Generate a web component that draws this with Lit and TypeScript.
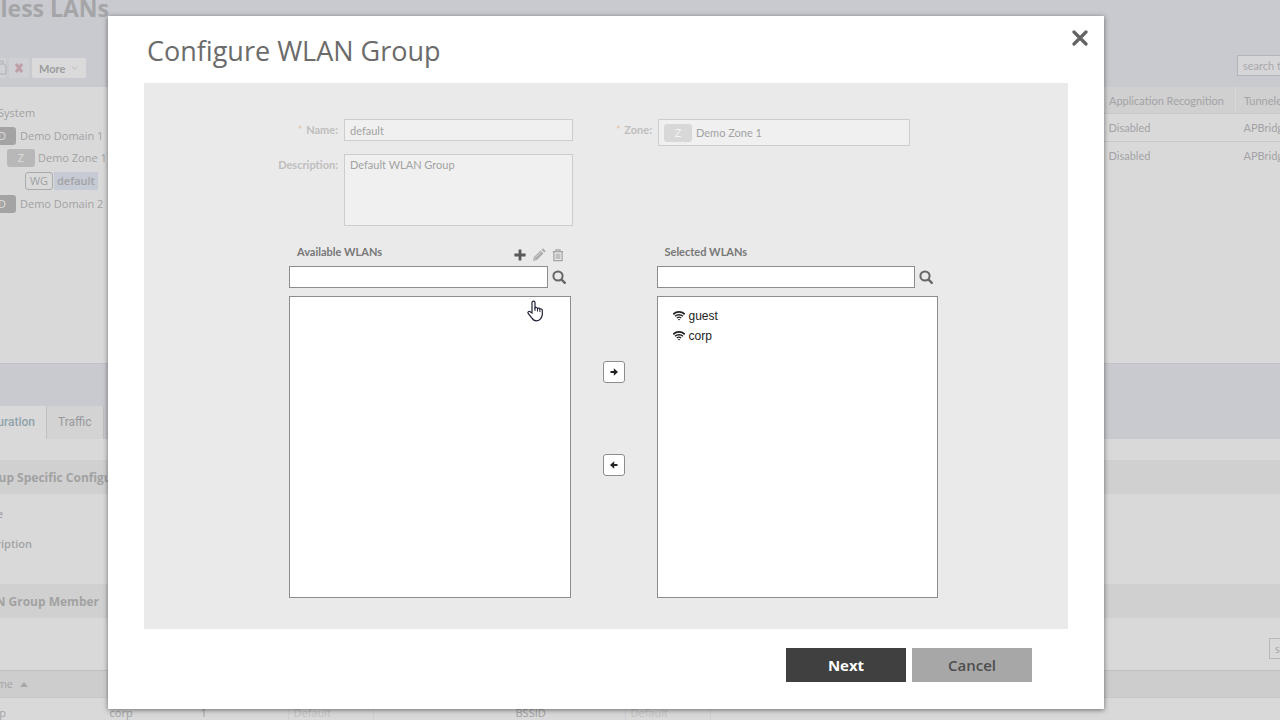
import { LitElement, html, css, svg } from "lit";
import { customElement, property } from "lit/decorators.js";

const arrow = svg`<path d="M1.500 4h3.300V1.300L9 5 4.800 8.700V6H1.500z" fill="#222"/>`;

@customElement("wlan-picker")
class WlanPicker extends LitElement {
  @property() heading = "";
  @property({ type: Boolean }) editable = false;
  @property({ type: Array }) items: string[] = [];

  static styles = css`
    :host { display: flex; flex-direction: column; min-width: 0; }
    .head { display: flex; align-items: center; height: 28px; padding: 0 6px 0 8px; }
    label { flex: 1; font-family: "Lato", sans-serif; font-size: 11px; font-weight: 700; color: #777; }
    button { border: 0; background: none; padding: 0; display: block; }
    .tools { display: flex; gap: 5px; padding-top: 6px; }
    svg { display: block; }
    .search { display: flex; align-items: center; gap: 4px; }
    input { flex: 1; min-width: 0; height: 22px; box-sizing: border-box; border: 1px solid #8d8d8d; background: #fff; border-radius: 0; padding: 0 5px; font: inherit; font-size: 11px; }
    .find { padding-right: 4px; }
    ul { list-style: none; margin: 8px 0 0; padding: 9px 15px; height: 302px; box-sizing: border-box; border: 1px solid #8d8d8d; background: #fff; font: 12px/20px "Liberation Sans", Arial, sans-serif; color: #222; }
    li { display: flex; align-items: center; gap: 4px; }
  `;

  render() {
    return html`
      <div class="head">
        <label for="q">${this.heading}</label>
        ${this.editable ? html`<div class="tools">
          <button aria-label="Add"><svg width="14" height="14" viewBox="0 0 14 14"><path d="M5.600 1.400h2.800v4.200h4.200v2.800H8.400v4.200H5.600V8.400H1.400V5.600h4.200z" fill="#5a5a5a"/></svg></button>
          <button aria-label="Edit" disabled><svg width="14" height="14" viewBox="0 0 14 14"><path d="M1 13l.9-3.900 6.600-6.600 3 3-6.600 6.600zM9.400 1.700l.9-.8c.5-.4 1-.4 1.400 0l1.400 1.500c.4.400.4.900 0 1.300l-.8.900z" fill="#adadad"/><path d="M3.100 9.700l5.600-5.600M2 10.600l1.400 1.500" stroke="#dedede" stroke-width=".8"/></svg></button>
          <button aria-label="Delete" disabled><svg width="14" height="14" viewBox="0 0 14 14"><path d="M1.800 3.600h10.400M5 3.400V1.800h4v1.600M2.900 4v8.600h8.200V4" fill="none" stroke="#a5a5a5" stroke-width="1.300"/><path d="M4.600 5.500v5.600h4.800V5.500z" fill="#c0c0c0"/></svg></button>
        </div>` : ""}
      </div>
      <div class="search">
        <input id="q" type="text" />
        <button class="find" aria-label="Search"><svg width="15" height="15" viewBox="0 0 15 15"><circle cx="6" cy="6" r="4.600" fill="none" stroke="#666" stroke-width="2"/><path d="M9.500 9.500l3.300 3.300" stroke="#666" stroke-width="2.400" stroke-linecap="round"/></svg></button>
      </div>
      <ul role="listbox" aria-label=${this.heading}>
        ${this.items.map((name) => html`<li role="option">
          <svg width="12" height="12" viewBox="0 0 12 12"><g fill="none" stroke="#222"><path d="M.2 4.300C3.500 1.100 8.500 1.100 11.800 4.300" stroke-width="1.800"/><path d="M2 6.300c2.200-2.100 5.800-2.100 8 0" stroke-width="1.400"/><path d="M3.800 8c1.300-1.100 3.100-1.100 4.400 0" stroke-width="1.300"/></g><path d="M4.800 9h2.400L6 10.500z" fill="#222"/></svg>
          <span>${name}</span></li>`)}
      </ul>`;
  }
}

@customElement("app-root")
class AppRoot extends LitElement {
  static styles = css`
    :host { display: block; position: relative; height: 100vh; overflow: hidden; font-family: "Open Sans", "Noto Sans", sans-serif; font-size: 11px; line-height: 16px; color: #a2a2a4; background: #d9d9d9; }
    button, input, textarea { font-family: inherit; }
    svg { display: block; }
    .page { margin-left: -120px; background: #d9d9d9; }
    .page h1 { margin: 0; width: 229px; text-align: right; font-size: 23px; line-height: 16px; font-weight: 700; color: #a5a5a8; white-space: nowrap; }
    .top { height: 87px; background: #c9cacf; display: flex; flex-direction: column; }
    .bar { display: flex; align-items: center; gap: 3px; padding: 39px 0 0 112px; height: 26px; }
    .bar .icon { width: 20px; height: 20px; padding: 0 3px; box-sizing: border-box; border: 0; background: #cfd0d4; }
    .bar .more { display: flex; align-items: center; gap: 6px; height: 20px; width: 54px; padding: 0 7px; border: 0; border-radius: 2px; background: #dadadb; color: #9c9c9e; font: 700 11px "Lato", sans-serif; }
    .bar .copy { width: 14px; }
    .bar input { flex: none; align-self: flex-start; margin: 0 -60px 0 auto; width: 103px; height: 21px; box-sizing: border-box; border: 1px solid #b4b5bb; background: #d6d6d8; padding: 3px 5px; font: 11px "Lato", sans-serif; }
    input::placeholder { color: #a8a8ab; opacity: 1; }
    .middle { display: flex; height: 276px; }
    .tree { list-style: none; width: 228px; box-sizing: border-box; margin: 0; padding: 14px 0 0; font-size: 11px; flex: none; }
    .tree li { display: flex; align-items: center; height: 23px; gap: 4px; white-space: nowrap; }
    .tag { width: 28px; height: 18px; line-height: 18px; text-align: center; border-radius: 3px; background: #b8b8b8; color: #dedede; flex: none; }
    .tag.dark { background: #a4a4a4; }
    .tag.line { box-sizing: border-box; border: 1px solid #ababab; line-height: 16px; background: none; color: #a2a2a4; }
    .l0 { padding-left: 118px; }
    .l1 { padding-left: 108px; }
    .tree .l2 { padding-left: 127px; height: 22px; gap: 3px; }
    .tree .l3 { padding-left: 145px; gap: 1px; }
    .sel { background: #c6cad4; padding: 1px 3px; font-weight: 600; }
    table { border-collapse: collapse; table-layout: fixed; width: 100%; }
    .nets { flex: 1; min-width: 0; }
    .nets table { font: 11px "Lato", sans-serif; }
    th, td { text-align: left; font-weight: 400; padding: 0 0 0 4px; height: 27px; white-space: nowrap; overflow: hidden; border-bottom: 1px solid #c8c8c8; color: #a3a3a6; }
    th { background: #d0d0d0; height: 26px; }
    th + th { border-left: 1px solid #d9d9d9; }
    tr:last-child td { border-bottom: 0; }
    .app { width: 126px; }
    .tun { width: 36px; padding-left: 8px; }
    .band { height: 76px; background: #c9cacf; display: flex; align-items: flex-end; box-sizing: border-box; border-top: 1px solid #c2c2c6; }
    .tab { height: 33px; box-sizing: border-box; border: 0; border-right: 1px solid #c0c0c3; background: #d3d3d4; color: #98989c; font: 12px "Roboto", sans-serif; padding: 0 11px 2px; }
    .tab.on { width: 167px; text-align: right; background: #d9d9d9; color: #8fa3ac; font-weight: 500; }
    .section { margin: 0; height: 34px; line-height: 36px; background: #d0d0d0; font-size: 12px; font-weight: 700; color: #a2a2a2; white-space: nowrap; padding-left: 78px; }
    .section.first { margin-top: 21px; }
    .section.member { padding-left: 89px; }
    .props { margin: 0; padding: 12px 0 0; height: 78px; width: 152px; text-align: right; }
    .props dt { height: 30px; font-weight: 600; }
    .props dt:first-child { width: 123px; }
    .filter { height: 52px; display: flex; align-items: center; justify-content: flex-end; padding-top: 9px; box-sizing: border-box; }
    .filter input { flex: none; width: 103px; margin-right: -92px; height: 21px; box-sizing: border-box; border: 1px solid #b8b8b8; background: #d9d9d9; padding: 3px 5px; font: 11px "Lato", sans-serif; }
    .members th { background: #cdcdcd; border-top: 1px solid #c0c0c0; }
    .members td { height: 26px; padding-top: 2px; }
    .mname { width: 225px; }
    th.mname, td.mname { padding-left: 0; }
    .mname span { display: inline-flex; align-items: center; justify-content: flex-end; width: 148px; gap: 7px; }
    .mname span.cell { width: 126px; }
    .mssid { width: 86px; }
    .mrole { width: 82px; }
    .mvlan { width: 223px; }
    .mbss { width: 104px; }
    .drop { display: block; width: 86px; height: 22px; box-sizing: border-box; border: 1px solid #cfcfcf; padding-left: 5px; line-height: 20px; color: #c2c2c2; }
    .overlay { position: absolute; inset: 0; display: flex; align-items: flex-start; padding: 16px 176px 11px 108px; }
    .dialog { flex: 1; min-width: 0; box-sizing: border-box; background: #fff; padding: 0 36px 27px; box-shadow: 0 1px 5px rgba(0, 0, 0, .5); }
    .title { display: flex; align-items: center; height: 67px; padding-left: 3px; }
    .title h2 { flex: 1; margin: 0; padding-top: 2px; font-size: 27px; line-height: 36px; font-weight: 400; color: #6b6b6b; }
    .close { align-self: flex-start; margin: 14px -20px 0 0; padding: 0; border: 0; background: none; }
    .panel { background: #eaeaea; padding: 36px 130px 31px 0; }
    .form { display: grid; grid-template-columns: 194px 229px 73px 252px; grid-template-rows: 27px 72px; column-gap: 6px; row-gap: 8px; align-items: start; height: 119px; box-sizing: border-box; font-family: "Lato", sans-serif; }
    .form > label { text-align: right; line-height: 22px; font-weight: 700; color: #bebebe; }
    .form i { font-style: normal; color: #e6cdb4; margin-right: 1px; }
    .form input, .form textarea { box-sizing: border-box; width: 100%; border: 1px solid #cdcdcd; border-radius: 0; background: #f0f0f0; color: #a2a2a2; font-size: 11px; line-height: 14px; padding: 3px 5px; margin: 0; display: block; resize: none; }
    .form input { height: 22px; }
    .form textarea { height: 72px; }
    .zone { display: flex; align-items: center; height: 27px; box-sizing: border-box; border: 1px solid #cdcdcd; background: #f0f0f0; padding-left: 5px; }
    .zone .tag { background: #d8d8d8; color: #f4f4f4; }
    .form .zone input { border: 0; padding: 0 4px; background: none; }
    .form > label[for="desc"], .form textarea { align-self: start; }
    .lists { display: grid; grid-template-columns: 1fr 86px 1fr; padding-left: 145px; }
    .move { display: flex; flex-direction: column; align-items: center; gap: 71px; padding-top: 123px; }
    .move button { width: 22px; height: 22px; box-sizing: border-box; border: 1px solid #8d8d8d; border-radius: 3px; background: #fff; padding: 5px; }
    .actions { display: flex; justify-content: flex-end; gap: 6px; padding: 19px 36px 0 0; }
    .actions button { width: 120px; height: 34px; border: 0; padding: 0; font-size: 15px; font-weight: 600; background: #a7a7a7; color: #4e4e4e; }
    .actions .next { background: #404040; color: #fff; font-weight: 700; }
    .hand { position: absolute; left: 527px; top: 300px; pointer-events: none; }
  `;

  render() {
    return html`
      <div class="page">
        <header class="top">
          <h1>Wireless LANs</h1>
          <div class="bar">
            <button class="icon copy" aria-label="Copy"><svg width="14" height="16" viewBox="0 0 14 16"><path d="M1 1h7v3M3 4h6l2 2v8H3z" fill="none" stroke="#b0b0b4"/></svg></button>
            <button class="icon" aria-label="Delete"><svg width="14" height="14" viewBox="0 0 14 14"><path d="M4 3l6 8M10 3l-6 8" stroke="#c0a0a8" stroke-width="3"/></svg></button>
            <button class="more">More<svg width="10" height="8" viewBox="0 0 10 8"><path d="M1.500 2.500L5 5.500l3.500-3" fill="none" stroke="#b2b2b4"/></svg></button>
            <input type="text" placeholder="search table" aria-label="Search table" />
          </div>
        </header>
        <div class="middle">
          <ul class="tree">
            <li class="l0">System</li>
            <li class="l1"><span class="tag dark">D</span>Demo Domain 1</li>
            <li class="l2"><span class="tag">Z</span>Demo Zone 1</li>
            <li class="l3"><span class="tag line">WG</span><span class="sel">default</span></li>
            <li class="l1"><span class="tag dark">D</span>Demo Domain 2</li>
          </ul>
          <div class="nets">
            <table>
              <tr><th></th><th class="app">Application Recognition</th><th class="tun">Tunneled</th></tr>
              <tr><td></td><td class="app">Disabled</td><td class="tun">APBridge</td></tr>
              <tr><td></td><td class="app">Disabled</td><td class="tun">APBridge</td></tr>
            </table>
          </div>
        </div>
        <nav class="band"><button class="tab on">Configuration</button><button class="tab">Traffic</button></nav>
        <h3 class="section first">AP Group Specific Configuration</h3>
        <dl class="props"><dt>Name</dt><dt>Description</dt></dl>
        <h3 class="section member">WLAN Group Member</h3>
        <div class="filter"><input type="text" placeholder="search" aria-label="Search members" /></div>
        <table class="members">
          <tr><th class="mname"><span>Name<svg width="8" height="5" viewBox="0 0 8 5"><path d="M0 5l4-5 4 5z" fill="#a8a8a8"/></svg></span></th><th class="mssid"></th><th class="mrole"></th><th class="mvlan"></th><th class="mbss"></th><th></th></tr>
          <tr><td class="mname"><span class="cell">corp</span></td><td class="mssid">corp</td><td class="mrole">1</td><td class="mvlan"><span class="drop">Default</span></td><td class="mbss">BSSID</td><td><span class="drop">Default</span></td></tr>
        </table>
      </div>
      <div class="overlay">
        <section class="dialog" role="dialog" aria-label="Configure WLAN Group">
          <div class="title">
            <h2>Configure WLAN Group</h2>
            <button class="close" aria-label="Close"><svg width="16" height="16" viewBox="0 0 16 16"><path d="M2 2l12 12M14 2L2 14" stroke="#636363" stroke-width="3.200" stroke-linecap="round"/></svg></button>
          </div>
          <div class="panel">
            <div class="form">
              <label for="name"><i>*</i> Name:</label>
              <input id="name" type="text" value="default" disabled />
              <label for="zone"><i>*</i> Zone:</label>
              <div class="zone"><span class="tag">Z</span><input id="zone" type="text" value="Demo Zone 1" disabled /></div>
              <label for="desc">Description:</label>
              <textarea id="desc" disabled>Default WLAN Group</textarea>
            </div>
            <div class="lists">
              <wlan-picker heading="Available WLANs" editable></wlan-picker>
              <div class="move">
                <button aria-label="Add to selected"><svg width="10" height="10" viewBox="0 0 10 10">${arrow}</svg></button>
                <button aria-label="Remove from selected"><svg width="10" height="10" viewBox="0 0 10 10"><g transform="rotate(180 5 5)">${arrow}</g></svg></button>
              </div>
              <wlan-picker heading="Selected WLANs" .items=${["guest", "corp"]}></wlan-picker>
            </div>
          </div>
          <div class="actions"><button class="next">Next</button><button>Cancel</button></div>
        </section>
      </div>
      <svg class="hand" width="17" height="22" viewBox="0 0 17 22"><path d="M5 13V2.500C5 .6 8 .6 8 2.500V8c.6-.9 2.300-.6 2.500.5.700-.8 2.200-.4 2.400.6.900-.7 2.400-.1 2.400 1.200v4.200c0 1.800-.8 2.900-1.600 4.200-1 1.500-2.200 2.100-4.200 2.100-2.200 0-3.400-.7-4.600-2.700L1.200 13.500c-.9-1.600.8-2.900 2-1.700z" fill="#fff" stroke="#222238" stroke-width="1.200"/><path d="M8 7.500V11M10.500 8.500V11.500M12.900 9.300V12" stroke="#222238"/></svg>`;
  }
}
